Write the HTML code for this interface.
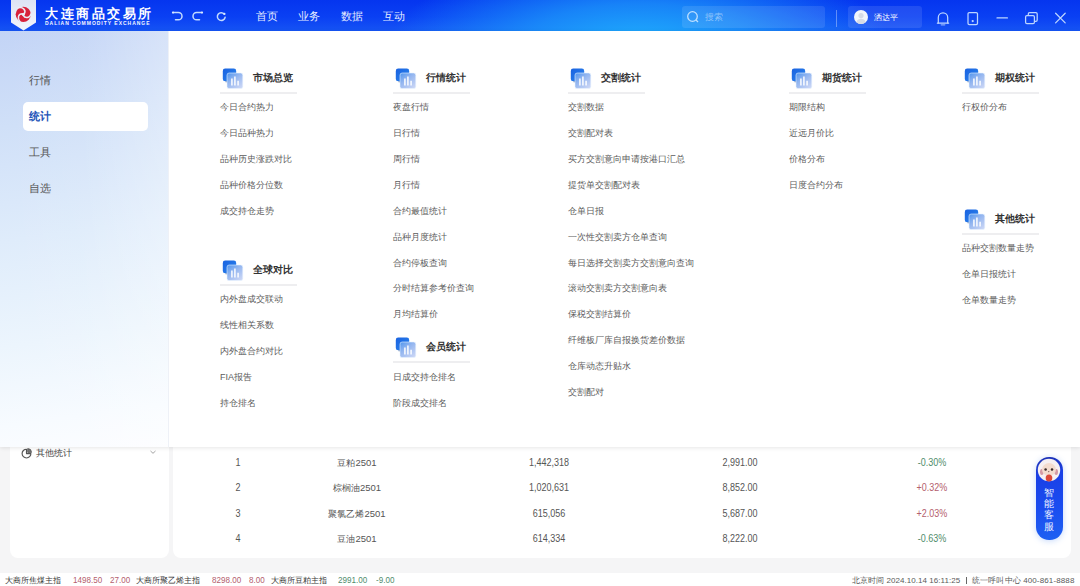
<!DOCTYPE html>
<html><head><meta charset="utf-8">
<style>
*{margin:0;padding:0;box-sizing:border-box}
html,body{width:1080px;height:586px;overflow:hidden;background:#f5f5f6;font-family:"Liberation Sans",sans-serif;position:relative}
.abs{position:absolute;white-space:nowrap}
#hdr{position:absolute;left:0;top:0;width:1080px;height:31px;background:radial-gradient(ellipse 250px 85px at 640px 42px,rgba(30,172,252,1) 0%,rgba(28,152,250,0.78) 45%,rgba(28,140,250,0) 100%),linear-gradient(180deg,#0535ef 0%,#0a40f3 55%,#1654f4 100%)}
#hdrshade{display:none}
.nav{position:absolute;top:9px;color:#e4ecff;font-size:11px;line-height:14px}
#side{position:absolute;left:0;top:31px;width:168px;height:416px;background:linear-gradient(90deg,rgba(255,255,255,0) 0%,rgba(255,255,255,0.05) 50%,rgba(255,255,255,0.3) 100%),linear-gradient(172deg,#c3d4f6 0%,#d0e0f8 22%,#dfecfb 48%,#ecf5fd 72%,#f7fbff 90%,#fcfdff 100%)}
#panel{position:absolute;left:168px;top:31px;width:912px;height:416px;background:#fff}
#pshadow{position:absolute;left:0;top:31px;width:1080px;height:416px;box-shadow:0 1px 4px rgba(0,0,0,0.10)}
.si{position:absolute;left:29px;font-size:11px;line-height:14px;color:#555}
.mt{position:absolute;font-size:10px;font-weight:bold;color:#333;line-height:14px}
.mi{position:absolute;font-size:9px;color:#5c5c5c;line-height:12px}
.ul{position:absolute;height:2px;width:77px;background:#eeeef0}
.ico{position:absolute;width:24px;height:22px}
.card{position:absolute;background:#fff;border-radius:8px}
.td{position:absolute;font-size:9.5px;color:#555;line-height:12px;width:100px;text-align:center}
.tn{font-size:10px;transform:scaleX(0.9)}
.cj{font-size:9px}
.sb{position:absolute;top:575px;font-size:8px;line-height:11px;color:#333}
.sn{font-size:9.5px;top:574px;transform:scaleX(0.85);transform-origin:0 50%}
</style></head><body>

<div id="hdr"></div>
<div id="hdrshade"></div>

<!-- logo badge -->
<svg class="abs" style="left:10px;top:0" width="27" height="31" viewBox="0 0 27 31">
  <defs><linearGradient id="bdg" x1="0" y1="0" x2="0" y2="1"><stop offset="0" stop-color="#dde3f4"/><stop offset="1" stop-color="#f4f6fb"/></linearGradient></defs>
  <path d="M1 0H26V22.5L13.5 30.5L1 22.5Z" fill="url(#bdg)"/>
  <g transform="translate(13.3,14.3)">
    <circle r="7.6" fill="#d8203a"/>
    <g fill="none" stroke="#e9ecf6" stroke-width="1.5" stroke-linecap="round">
      <path d="M1 -0.5C3 -4 0 -7.5 -5 -6.5"/>
      <path d="M1 -0.5C3 -4 0 -7.5 -5 -6.5" transform="rotate(120)"/>
      <path d="M1 -0.5C3 -4 0 -7.5 -5 -6.5" transform="rotate(240)"/>
    </g>
    <circle r="1.6" fill="#e9ecf6"/>
  </g>
</svg>
<div class="abs" style="left:45px;top:6px;color:#fff;font-size:13px;font-weight:bold;line-height:16px;letter-spacing:2.5px">大连商品交易所</div>
<div class="abs" style="left:45px;top:21px;color:#f4f7ff;font-size:5px;font-weight:bold;line-height:5px;letter-spacing:0.98px">DALIAN COMMODITY EXCHANGE</div>

<!-- undo redo refresh -->
<svg class="abs" style="left:170px;top:9px" width="60" height="14" viewBox="0 0 60 14" fill="none" stroke="#c2dafe" stroke-width="1.5" stroke-linecap="round">
  <path d="M3 3.6H8.4A3.6 3.6 0 0 1 8.4 10.8H5.5"/><circle cx="3" cy="3.6" r="1.1" fill="#d8e8ff" stroke="none"/>
  <path d="M32 3.6H26.6A3.6 3.6 0 0 0 26.6 10.8H29.5"/><circle cx="32" cy="3.6" r="1.1" fill="#d8e8ff" stroke="none"/>
  <path d="M54.2 5A3.9 3.9 0 1 0 55.1 8.3"/><circle cx="54.4" cy="4.9" r="1.1" fill="#d8e8ff" stroke="none"/>
</svg>

<div class="nav" style="left:256px">首页</div>
<div class="nav" style="left:298px">业务</div>
<div class="nav" style="left:341px">数据</div>
<div class="nav" style="left:383px">互动</div>

<!-- search -->
<div class="abs" style="left:682px;top:6px;width:143px;height:22px;border-radius:3px;background:rgba(255,255,255,0.1)"></div>
<svg class="abs" style="left:686px;top:10px" width="14" height="14" viewBox="0 0 14 14" fill="none" stroke="#bfe0ff" stroke-width="1.3"><circle cx="6.5" cy="6.5" r="4.8"/><path d="M10 10L12 12"/></svg>
<div class="abs" style="left:705px;top:11px;font-size:9px;line-height:12px;color:rgba(255,255,255,0.45)">搜索</div>
<div class="abs" style="left:836px;top:10px;width:1px;height:17px;background:rgba(255,255,255,0.35)"></div>
<!-- user pill -->
<div class="abs" style="left:848px;top:6px;width:74px;height:22px;border-radius:3px;background:rgba(255,255,255,0.1)"></div>
<svg class="abs" style="left:854px;top:10px" width="14" height="14" viewBox="0 0 14 14"><circle cx="7" cy="7" r="7" fill="#f2f5fb"/><circle cx="7" cy="5.6" r="2.6" fill="#d6dbe6"/><path d="M2.3 12.2C3.2 9.6 5 8.8 7 8.8S10.8 9.6 11.7 12.2A7 7 0 0 1 2.3 12.2Z" fill="#d6dbe6"/></svg>
<div class="abs" style="left:874px;top:12px;font-size:8px;line-height:11px;color:#fff">洒达平</div>
<!-- right icons -->
<svg class="abs" style="left:930px;top:8px" width="145" height="18" viewBox="0 0 145 18" fill="none" stroke="#bcd5ff" stroke-width="1.25" stroke-linecap="round">
  <path d="M8.3 15V9.6A4.7 4.7 0 0 1 17.7 9.6V15"/><path d="M7.4 15.2H18.6"/><path d="M11.2 16.8H14.8" stroke-opacity="0.7"/>
  <rect x="38" y="4.5" width="9.5" height="12" rx="1.3"/><circle cx="42.7" cy="13" r="0.5" fill="#cfe0ff"/>
  <path d="M67 9.9H77.4"/>
  <rect x="95.6" y="7.6" width="8.8" height="8" rx="1.3"/><path d="M98.3 7.3V6A1.3 1.3 0 0 1 99.6 4.7H105.9A1.3 1.3 0 0 1 107.2 6V12A1.3 1.3 0 0 1 105.9 13.3H104.6"/>
  <path d="M125.6 5.2L135.2 14.9M135.2 5.2L125.6 14.9"/>
</svg>

<!-- lower page -->
<div class="card" style="left:10px;top:380px;width:159px;height:178px"></div>
<div class="card" style="left:173px;top:380px;width:898px;height:178px"></div>
<svg class="abs" style="left:21px;top:447.5px" width="12" height="11" viewBox="0 0 12 11" fill="none" stroke="#555" stroke-width="1.15"><path d="M5.5 1.2A4.4 4.4 0 1 0 9.9 5.6H5.5Z" stroke-linejoin="round"/><path d="M6.7 0.6V4.4H10.5A3.8 3.8 0 0 0 6.7 0.6Z" fill="#777" stroke-width="0.8"/></svg>
<div class="abs" style="left:36px;top:447px;font-size:9px;line-height:12px;color:#444">其他统计</div>
<svg class="abs" style="left:149px;top:449px" width="8" height="6" viewBox="0 0 8 6" fill="none" stroke="#999" stroke-width="0.9"><path d="M1.5 2L4 4.3L6.5 2"/></svg>
<div class="td tn" style="left:188px;top:457px">1</div>
<div class="td" style="left:307px;top:457px"><span class="cj">豆粕</span>2501</div>
<div class="td tn" style="left:499px;top:457px">1,442,318</div>
<div class="td tn" style="left:690px;top:457px">2,991.00</div>
<div class="td tn" style="left:882px;top:457px;color:#4f8c6c">-0.30%</div>
<div class="td tn" style="left:188px;top:482px">2</div>
<div class="td" style="left:307px;top:482px"><span class="cj">棕榈油</span>2501</div>
<div class="td tn" style="left:499px;top:482px">1,020,631</div>
<div class="td tn" style="left:690px;top:482px">8,852.00</div>
<div class="td tn" style="left:882px;top:482px;color:#b4606e">+0.32%</div>
<div class="td tn" style="left:188px;top:508px">3</div>
<div class="td" style="left:307px;top:508px"><span class="cj">聚氯乙烯</span>2501</div>
<div class="td tn" style="left:499px;top:508px">615,056</div>
<div class="td tn" style="left:690px;top:508px">5,687.00</div>
<div class="td tn" style="left:882px;top:508px;color:#b4606e">+2.03%</div>
<div class="td tn" style="left:188px;top:533px">4</div>
<div class="td" style="left:307px;top:533px"><span class="cj">豆油</span>2501</div>
<div class="td tn" style="left:499px;top:533px">614,334</div>
<div class="td tn" style="left:690px;top:533px">8,222.00</div>
<div class="td tn" style="left:882px;top:533px;color:#4f8c6c">-0.63%</div>
<div class="abs" style="left:0;top:573px;width:1080px;height:13px;background:#fff"></div>
<div class="sb" style="left:5px">大商所焦煤主指</div>
<div class="sb sn" style="left:73px;color:#b4606e">1498.50</div>
<div class="sb sn" style="left:110px;color:#b4606e">27.00</div>
<div class="sb" style="left:136px">大商所聚乙烯主指</div>
<div class="sb sn" style="left:212px;color:#b4606e">8298.00</div>
<div class="sb sn" style="left:249px;color:#b4606e">8.00</div>
<div class="sb" style="left:271px">大商所豆粕主指</div>
<div class="sb sn" style="left:338px;color:#4f8c6c">2991.00</div>
<div class="sb sn" style="left:376px;color:#4f8c6c">-9.00</div>
<div class="sb" style="left:852px;color:#5a5a5a;letter-spacing:0.05px">北京时间 2024.10.14 16:11:25</div>
<div class="abs" style="left:966px;top:577px;width:1px;height:7px;background:#666"></div>
<div class="sb" style="left:972px;color:#5a5a5a;letter-spacing:0.13px">统一呼叫中心 400-861-8888</div>
<div class="abs" style="left:1036px;top:457px;width:26.5px;height:83px;border-radius:13px;background:linear-gradient(170deg,#1e30b0 0%,#1a40e6 22%,#1a4cf0 60%,#1f62f2 100%);box-shadow:0 1px 6px rgba(50,120,240,0.28)"></div>
<svg class="abs" style="left:1037px;top:458px" width="24" height="24" viewBox="0 0 24 24">
<circle cx="12" cy="12" r="11.2" fill="#f6f0f2"/>
<ellipse cx="4.8" cy="14" rx="1.8" ry="3" fill="#d49aa4"/>
<ellipse cx="19.2" cy="14" rx="1.8" ry="3" fill="#d49aa4"/>
<ellipse cx="12" cy="11.5" rx="7" ry="6.5" fill="#f3dccf"/>
<circle cx="8.6" cy="11.6" r="1.25" fill="#3a2a2a"/>
<circle cx="15" cy="11.6" r="1.25" fill="#3a2a2a"/>
<circle cx="11.8" cy="13.6" r="0.55" fill="#5a3a3a"/>
<ellipse cx="12" cy="20" rx="3.3" ry="3.5" fill="#dc4a3a"/>
</svg>
<div class="abs" style="left:1039px;top:487px;width:20.5px;font-size:9.5px;line-height:11.2px;color:#eef3ff;text-align:center">智<br>能<br>客<br>服</div>

<div id="pshadow"></div>
<div id="side"></div>
<div id="panel"></div>
<div class="abs" style="left:168px;top:31px;width:1px;height:416px;background:rgba(200,210,230,0.3)"></div>
<div class="si" style="top:73px">行情</div>
<div class="abs" style="left:23px;top:102px;width:125px;height:29px;border-radius:5px;background:#fff"></div>
<div class="si" style="top:109px;color:#2455b8;font-weight:bold">统计</div>
<div class="si" style="top:145px">工具</div>
<div class="si" style="top:181px">自选</div>
<svg width="0" height="0" style="position:absolute">
<defs>
<linearGradient id="gb" x1="0" y1="0" x2="1" y2="1"><stop offset="0" stop-color="#1a62e0"/><stop offset="1" stop-color="#2b86ee"/></linearGradient>
<linearGradient id="gf" x1="0" y1="0" x2="0.8" y2="1"><stop offset="0" stop-color="#4f95ee"/><stop offset="0.45" stop-color="#94b6f0"/><stop offset="1" stop-color="#c9d5f5"/></linearGradient>
<symbol id="ic" viewBox="0 0 24 22">
<rect x="0.8" y="1.5" width="13.4" height="12.8" rx="2.4" fill="url(#gb)"/>
<circle cx="4.2" cy="14.7" r="0.7" fill="#3a5a8a" fill-opacity="0.7"/>
<rect x="5" y="6" width="15.8" height="15.6" rx="2.2" fill="url(#gf)" stroke="#e8f4ff" stroke-width="0.6"/>
<path d="M9.9 18.5V11.5M12.9 18.5V9.6M16.1 18.5V13.8" stroke="#fff" stroke-opacity="0.85" stroke-width="1.7"/>
</symbol>
</defs></svg>
<!--MENU-->
<svg class="ico" style="left:222px;top:67px" width="24" height="22"><use href="#ic"/></svg>
<div class="mt" style="left:253px;top:71px">市场总览</div>
<div class="ul" style="left:220px;top:92px"></div>
<div class="mi" style="left:220px;top:101px">今日合约热力</div>
<div class="mi" style="left:220px;top:127px">今日品种热力</div>
<div class="mi" style="left:220px;top:153px">品种历史涨跌对比</div>
<div class="mi" style="left:220px;top:179px">品种价格分位数</div>
<div class="mi" style="left:220px;top:205px">成交持仓走势</div>
<svg class="ico" style="left:222px;top:259px" width="24" height="22"><use href="#ic"/></svg>
<div class="mt" style="left:253px;top:263px">全球对比</div>
<div class="ul" style="left:220px;top:284px"></div>
<div class="mi" style="left:220px;top:293px">内外盘成交联动</div>
<div class="mi" style="left:220px;top:319px">线性相关系数</div>
<div class="mi" style="left:220px;top:345px">内外盘合约对比</div>
<div class="mi" style="left:220px;top:371px">FIA报告</div>
<div class="mi" style="left:220px;top:397px">持仓排名</div>
<svg class="ico" style="left:395px;top:67px" width="24" height="22"><use href="#ic"/></svg>
<div class="mt" style="left:426px;top:71px">行情统计</div>
<div class="ul" style="left:393px;top:92px"></div>
<div class="mi" style="left:393px;top:101px">夜盘行情</div>
<div class="mi" style="left:393px;top:127px">日行情</div>
<div class="mi" style="left:393px;top:153px">周行情</div>
<div class="mi" style="left:393px;top:179px">月行情</div>
<div class="mi" style="left:393px;top:205px">合约最值统计</div>
<div class="mi" style="left:393px;top:231px">品种月度统计</div>
<div class="mi" style="left:393px;top:257px">合约停板查询</div>
<div class="mi" style="left:393px;top:282px">分时结算参考价查询</div>
<div class="mi" style="left:393px;top:308px">月均结算价</div>
<svg class="ico" style="left:395px;top:336px" width="24" height="22"><use href="#ic"/></svg>
<div class="mt" style="left:426px;top:340px">会员统计</div>
<div class="ul" style="left:393px;top:361px"></div>
<div class="mi" style="left:393px;top:371px">日成交持仓排名</div>
<div class="mi" style="left:393px;top:397px">阶段成交排名</div>
<svg class="ico" style="left:570px;top:67px" width="24" height="22"><use href="#ic"/></svg>
<div class="mt" style="left:601px;top:71px">交割统计</div>
<div class="ul" style="left:568px;top:92px"></div>
<div class="mi" style="left:568px;top:101px">交割数据</div>
<div class="mi" style="left:568px;top:127px">交割配对表</div>
<div class="mi" style="left:568px;top:153px">买方交割意向申请按港口汇总</div>
<div class="mi" style="left:568px;top:179px">提货单交割配对表</div>
<div class="mi" style="left:568px;top:205px">仓单日报</div>
<div class="mi" style="left:568px;top:231px">一次性交割卖方仓单查询</div>
<div class="mi" style="left:568px;top:257px">每日选择交割卖方交割意向查询</div>
<div class="mi" style="left:568px;top:282px">滚动交割卖方交割意向表</div>
<div class="mi" style="left:568px;top:308px">保税交割结算价</div>
<div class="mi" style="left:568px;top:334px">纤维板厂库自报换货差价数据</div>
<div class="mi" style="left:568px;top:360px">仓库动态升贴水</div>
<div class="mi" style="left:568px;top:386px">交割配对</div>
<svg class="ico" style="left:791px;top:67px" width="24" height="22"><use href="#ic"/></svg>
<div class="mt" style="left:822px;top:71px">期货统计</div>
<div class="ul" style="left:789px;top:92px"></div>
<div class="mi" style="left:789px;top:101px">期限结构</div>
<div class="mi" style="left:789px;top:127px">近远月价比</div>
<div class="mi" style="left:789px;top:153px">价格分布</div>
<div class="mi" style="left:789px;top:179px">日度合约分布</div>
<svg class="ico" style="left:964px;top:67px" width="24" height="22"><use href="#ic"/></svg>
<div class="mt" style="left:995px;top:71px">期权统计</div>
<div class="ul" style="left:962px;top:92px"></div>
<div class="mi" style="left:962px;top:101px">行权价分布</div>
<svg class="ico" style="left:964px;top:208px" width="24" height="22"><use href="#ic"/></svg>
<div class="mt" style="left:995px;top:212px">其他统计</div>
<div class="ul" style="left:962px;top:233px"></div>
<div class="mi" style="left:962px;top:242px">品种交割数量走势</div>
<div class="mi" style="left:962px;top:268px">仓单日报统计</div>
<div class="mi" style="left:962px;top:294px">仓单数量走势</div>
<!--/MENU-->
</body></html>
